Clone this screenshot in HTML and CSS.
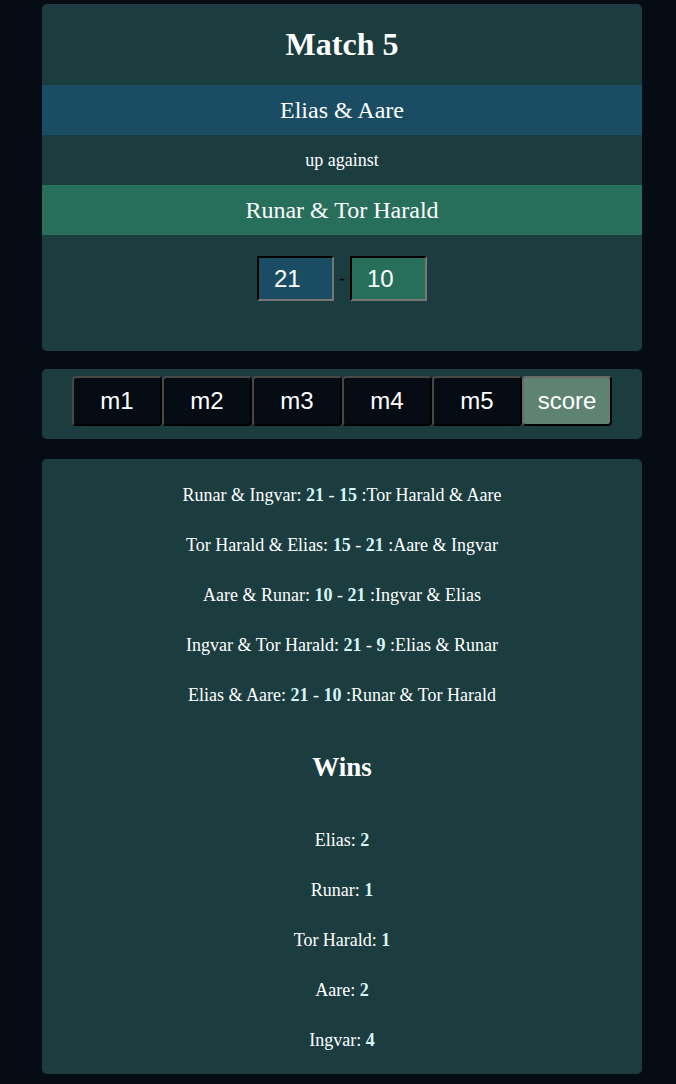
FILE: index.html
```html
<!DOCTYPE html>
<html>
<head>
<meta charset="utf-8">
<link rel="stylesheet" href="styles.css">
</head>
<body>
<div class="page">
  <section class="card match">
    <h1 class="title">Match 5</h1>
    <div class="team team-a">Elias &amp; Aare</div>
    <div class="vs">up against</div>
    <div class="team team-b">Runar &amp; Tor Harald</div>
    <div class="scores">
      <input class="score-input score-a" type="text" value="21">
      <span class="dash">-</span>
      <input class="score-input score-b" type="text" value="10">
    </div>
  </section>

  <nav class="card tabs">
    <button class="tab">m1</button><button class="tab">m2</button><button class="tab">m3</button><button class="tab">m4</button><button class="tab">m5</button><button class="tab tab-active">score</button>
  </nav>

  <section class="card results">
    <div class="row">Runar &amp; Ingvar: <b>21</b> - <b>15</b> :Tor Harald &amp; Aare</div>
    <div class="row">Tor Harald &amp; Elias: <b>15</b> - <b>21</b> :Aare &amp; Ingvar</div>
    <div class="row">Aare &amp; Runar: <b>10</b> - <b>21</b> :Ingvar &amp; Elias</div>
    <div class="row">Ingvar &amp; Tor Harald: <b>21</b> - <b>9</b> :Elias &amp; Runar</div>
    <div class="row">Elias &amp; Aare: <b>21</b> - <b>10</b> :Runar &amp; Tor Harald</div>
    <h2 class="wins-title">Wins</h2>
    <div class="row">Elias: <b>2</b></div>
    <div class="row">Runar: <b>1</b></div>
    <div class="row">Tor Harald: <b>1</b></div>
    <div class="row">Aare: <b>2</b></div>
    <div class="row">Ingvar: <b>4</b></div>
  </section>
</div>
</body>
</html>
```

FILE: styles.css
```css
html, body {
  margin: 0;
  padding: 0;
  background: #050c14;
}

body {
  font-family: "Liberation Serif", "Times New Roman", serif;
  color: #ffffff;
}

.page {
  width: 600px;
  margin-left: 42px;
  padding-top: 4px;
  display: flex;
  flex-direction: column;
}

.card {
  background: #1c3d3f;
  border-radius: 5px;
  text-align: center;
}

.match {
  padding-bottom: 50px;
}

.title {
  margin: 0;
  height: 81px;
  line-height: 81px;
  font-size: 32px;
  font-weight: bold;
}

.team {
  height: 50px;
  line-height: 50px;
  font-size: 24px;
}

.team-a {
  background: #1a4d63;
}

.team-b {
  background: #276f5a;
}

.vs {
  height: 50px;
  line-height: 50px;
  font-size: 18px;
}

.scores {
  padding-top: 21px;
  display: flex;
  justify-content: center;
  align-items: center;
  gap: 4px;
}

.score-input {
  box-sizing: border-box;
  width: 77px;
  height: 45px;
  padding: 0 0 0 15px;
  font-family: "Liberation Sans", Arial, sans-serif;
  font-size: 24px;
  color: #ffffff;
  border: 2px inset #767676;
  border-top-color: #222;
  border-left-color: #222;
  border-right-color: #767676;
  border-bottom-color: #767676;
  outline: none;
}

.score-a {
  background: #1a4d63;
}

.score-b {
  background: #276f5a;
}

.dash {
  color: #000000;
  font-size: 18px;
  width: 8px;
}

.tabs {
  margin-top: 18px;
  padding: 7px 0 13px;
  display: flex;
  justify-content: center;
}

.tab {
  box-sizing: border-box;
  width: 90px;
  height: 50px;
  background: #050c14;
  color: #ffffff;
  font-family: "Liberation Sans", Arial, sans-serif;
  font-size: 24px;
  border: 2px outset #3a3a3a;
  border-color: #484848 #1a1a1a #1a1a1a #484848;
  border-radius: 4px;
  padding: 0;
}

.tab-active {
  background: #5e8372;
  border-color: #6a6a6a #1a1a1a #1a1a1a #6a6a6a;
}

.results {
  margin-top: 20px;
  padding: 11px 0 9px;
}

.row {
  height: 50px;
  line-height: 50px;
  font-size: 18px;
}

.row b {
  color: #d4f6f6;
}

.wins-title {
  margin: 0;
  height: 95px;
  line-height: 95px;
  font-size: 27px;
  font-weight: bold;
}
```
